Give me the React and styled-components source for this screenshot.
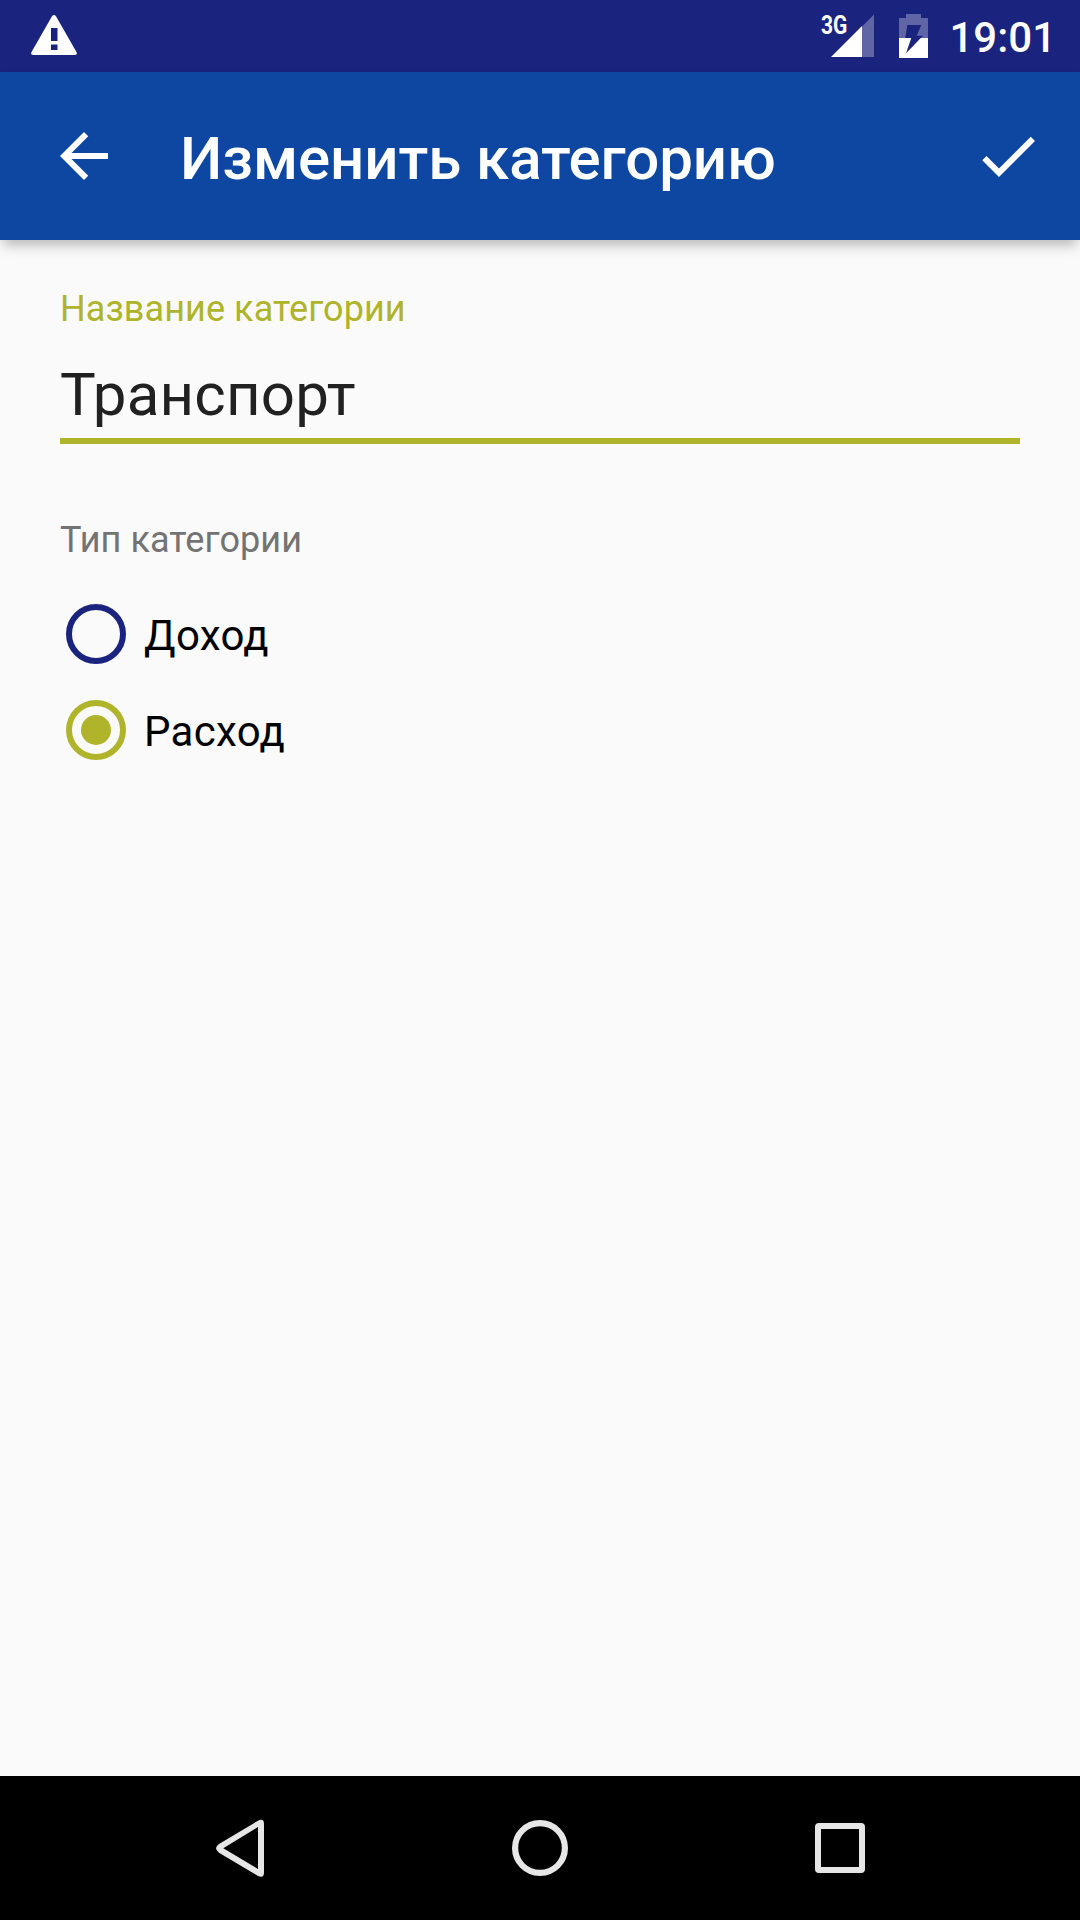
import React, { useState } from 'react';
import styled, { createGlobalStyle } from 'styled-components';

const GlobalStyle = createGlobalStyle`
  * { box-sizing: border-box; }
  body { margin: 0; background: #fafafa; font-family: Roboto, "Noto Sans", sans-serif; }
`;

const Screen = styled.div`
  display: flex;
  flex-direction: column;
  width: 1080px;
  height: 1920px;
  background: #fafafa;
  overflow: hidden;
`;

const StatusBar = styled.header`
  display: flex;
  align-items: center;
  justify-content: space-between;
  height: 72px;
  padding: 0 24px 0 31px;
  background: #1a237e;
  color: #fff;
`;

const StatusIcons = styled.div`
  display: flex;
  align-items: center;
`;

const NetworkLabel = styled.span`
  width: 10px;
  padding-bottom: 22px;
  font-size: 25px;
  font-weight: 700;
  line-height: 29px;
  white-space: nowrap;
  transform: scaleX(0.84);
  transform-origin: left center;
`;

const StatusIcon = styled.svg`
  display: block;
  flex: none;
  width: ${(p) => p.$w}px;
  height: ${(p) => p.$h}px;
  margin-right: ${(p) => p.$gap || 0}px;
`;

const Clock = styled.time`
  padding-top: 3px;
  font-size: 42px;
  font-weight: 500;
  line-height: 50px;
`;

const AppBar = styled.div`
  display: flex;
  align-items: center;
  height: 168px;
  padding: 0 36px 0 48px;
  background: #0d47a1;
  color: #fff;
  box-shadow: 0 8px 12px -3px rgba(0, 0, 0, 0.27);
`;

const IconButton = styled.button`
  flex: none;
  width: 72px;
  height: 72px;
  padding: 0;
  border: 0;
  background: none;
  color: inherit;

  svg { display: block; width: 72px; height: 72px; fill: currentColor; }
`;

const Title = styled.h1`
  flex: 1;
  margin: 0 0 0 60px;
  padding-top: 5px;
  font-size: 60px;
  font-weight: 500;
  line-height: 72px;
  letter-spacing: -0.06px;
`;

const Form = styled.main`
  flex: 1;
  display: flex;
  flex-direction: column;
  padding: 48px 60px 0;
`;

const Caption = styled.label`
  font-size: 36px;
  line-height: 42px;
  letter-spacing: 0.09px;
  color: ${(p) => (p.$active ? '#afb42b' : '#737373')};
`;

const NameInput = styled.input`
  height: 84px;
  margin: 30px 0 75px;
  padding: 0 0 10px;
  border: 0;
  border-bottom: 6px solid #afb42b;
  border-radius: 0;
  outline: 0;
  background: transparent;
  color: #212121;
  font: 400 60px/68px Roboto, "Noto Sans", sans-serif;
  letter-spacing: 0.2px;
`;

const RadioGroup = styled.div`
  display: flex;
  flex-direction: column;
  margin-top: 25px;
`;

const RadioRow = styled.label`
  display: flex;
  align-items: center;
  gap: 18px;
  height: 96px;
  padding-left: 6px;
`;

const Radio = styled.input`
  appearance: none;
  display: grid;
  place-items: center;
  width: 60px;
  height: 60px;
  margin: 0;
  border: 6px solid ${(p) => (p.checked ? '#afb42b' : '#1a237e')};
  border-radius: 50%;

  &:checked::before {
    content: '';
    width: 30px;
    height: 30px;
    border-radius: 50%;
    background: #afb42b;
  }
`;

const RadioText = styled.span`
  padding-top: 3px;
  font-size: 42px;
  line-height: 50px;
  letter-spacing: 0.3px;
  color: #000;
`;

const NavBar = styled.nav`
  display: flex;
  align-items: center;
  justify-content: center;
  gap: 216px;
  height: 144px;
  background: #000;
`;

const NavButton = styled.button`
  width: 84px;
  height: 84px;
  padding: 0;
  border: 0;
  background: none;

  svg { display: block; width: 84px; height: 84px; }
`;

const TYPES = ['Доход', 'Расход'];

export default function App() {
  const [name, setName] = useState('Транспорт');
  const [type, setType] = useState('Расход');

  return (
    <>
      <GlobalStyle />
      <Screen>
        <StatusBar>
          <StatusIcon $w={46} $h={42} viewBox="0 0 46 42">
            <path
              fill="#fff"
              fillRule="evenodd"
              d="M21 1.2Q23 -1 25 1.2L45.6 37.2Q46.6 40 44 40H2Q-0.6 40 0.4 37.2ZM20 13V26H26.5V13ZM20 29.5V35H26.5V29.5Z"
            />
          </StatusIcon>
          <StatusIcons>
            <NetworkLabel>3G</NetworkLabel>
            <StatusIcon $w={43} $h={44} $gap={25} viewBox="0 0 43 44">
              <path fill="#fff" fillOpacity="0.3" d="M31 12.5L43 0.5V43H31Z" />
              <path fill="#fff" d="M0 43L31 12V43Z" />
            </StatusIcon>
            <StatusIcon $w={29} $h={44} $gap={21} viewBox="0 0 29 44">
              <path fill="#fff" fillOpacity="0.3" d="M7 0H22V4H29V24H21.8L24 21.7H17.7L22.3 11H8.3L6.3 24H0V4H7Z" />
              <path fill="#fff" d="M0 24H12.3L7 39.3L21.8 24H29V44H0Z" />
            </StatusIcon>
            <Clock>19:01</Clock>
          </StatusIcons>
        </StatusBar>
        <AppBar>
          <IconButton aria-label="Назад">
            <svg viewBox="0 0 24 24"><path d="M20 11H7.83l5.59-5.59L12 4l-8 8 8 8 1.41-1.41L7.83 13H20v-2z" /></svg>
          </IconButton>
          <Title>Изменить категорию</Title>
          <IconButton aria-label="Сохранить">
            <svg viewBox="0 0 24 24"><path d="M9 16.17L4.83 12l-1.42 1.41L9 19 21 7l-1.41-1.41z" /></svg>
          </IconButton>
        </AppBar>
        <Form>
          <Caption $active htmlFor="name">Название категории</Caption>
          <NameInput id="name" value={name} spellCheck={false} onChange={(e) => setName(e.target.value)} />
          <Caption as="div">Тип категории</Caption>
          <RadioGroup>
            {TYPES.map((t) => (
              <RadioRow key={t}>
                <Radio type="radio" name="type" checked={t === type} onChange={() => setType(t)} />
                <RadioText>{t}</RadioText>
              </RadioRow>
            ))}
          </RadioGroup>
        </Form>
        <NavBar>
          <NavButton aria-label="Назад">
            <svg viewBox="198 1806 84 84">
              <path
                fill="#e6e6e6"
                fillRule="evenodd"
                d="M219 1844L258 1820.7Q264 1818 264 1824V1872.6Q264 1878.6 258 1876L219 1852.7Q213 1848.3 219 1844ZM223.3 1848.3L258 1869V1827Z"
              />
            </svg>
          </NavButton>
          <NavButton aria-label="Домой">
            <svg viewBox="0 0 84 84"><circle cx="42" cy="42" r="24.9" fill="none" stroke="#e6e6e6" strokeWidth="6.2" /></svg>
          </NavButton>
          <NavButton aria-label="Обзор">
            <svg viewBox="0 0 84 84">
              <path
                fill="#e6e6e6"
                fillRule="evenodd"
                d="M21 17H63Q67 17 67 21V63Q67 67 63 67H21Q17 67 17 63V21Q17 17 21 17ZM23 23V61H61V23Z"
              />
            </svg>
          </NavButton>
        </NavBar>
      </Screen>
    </>
  );
}
